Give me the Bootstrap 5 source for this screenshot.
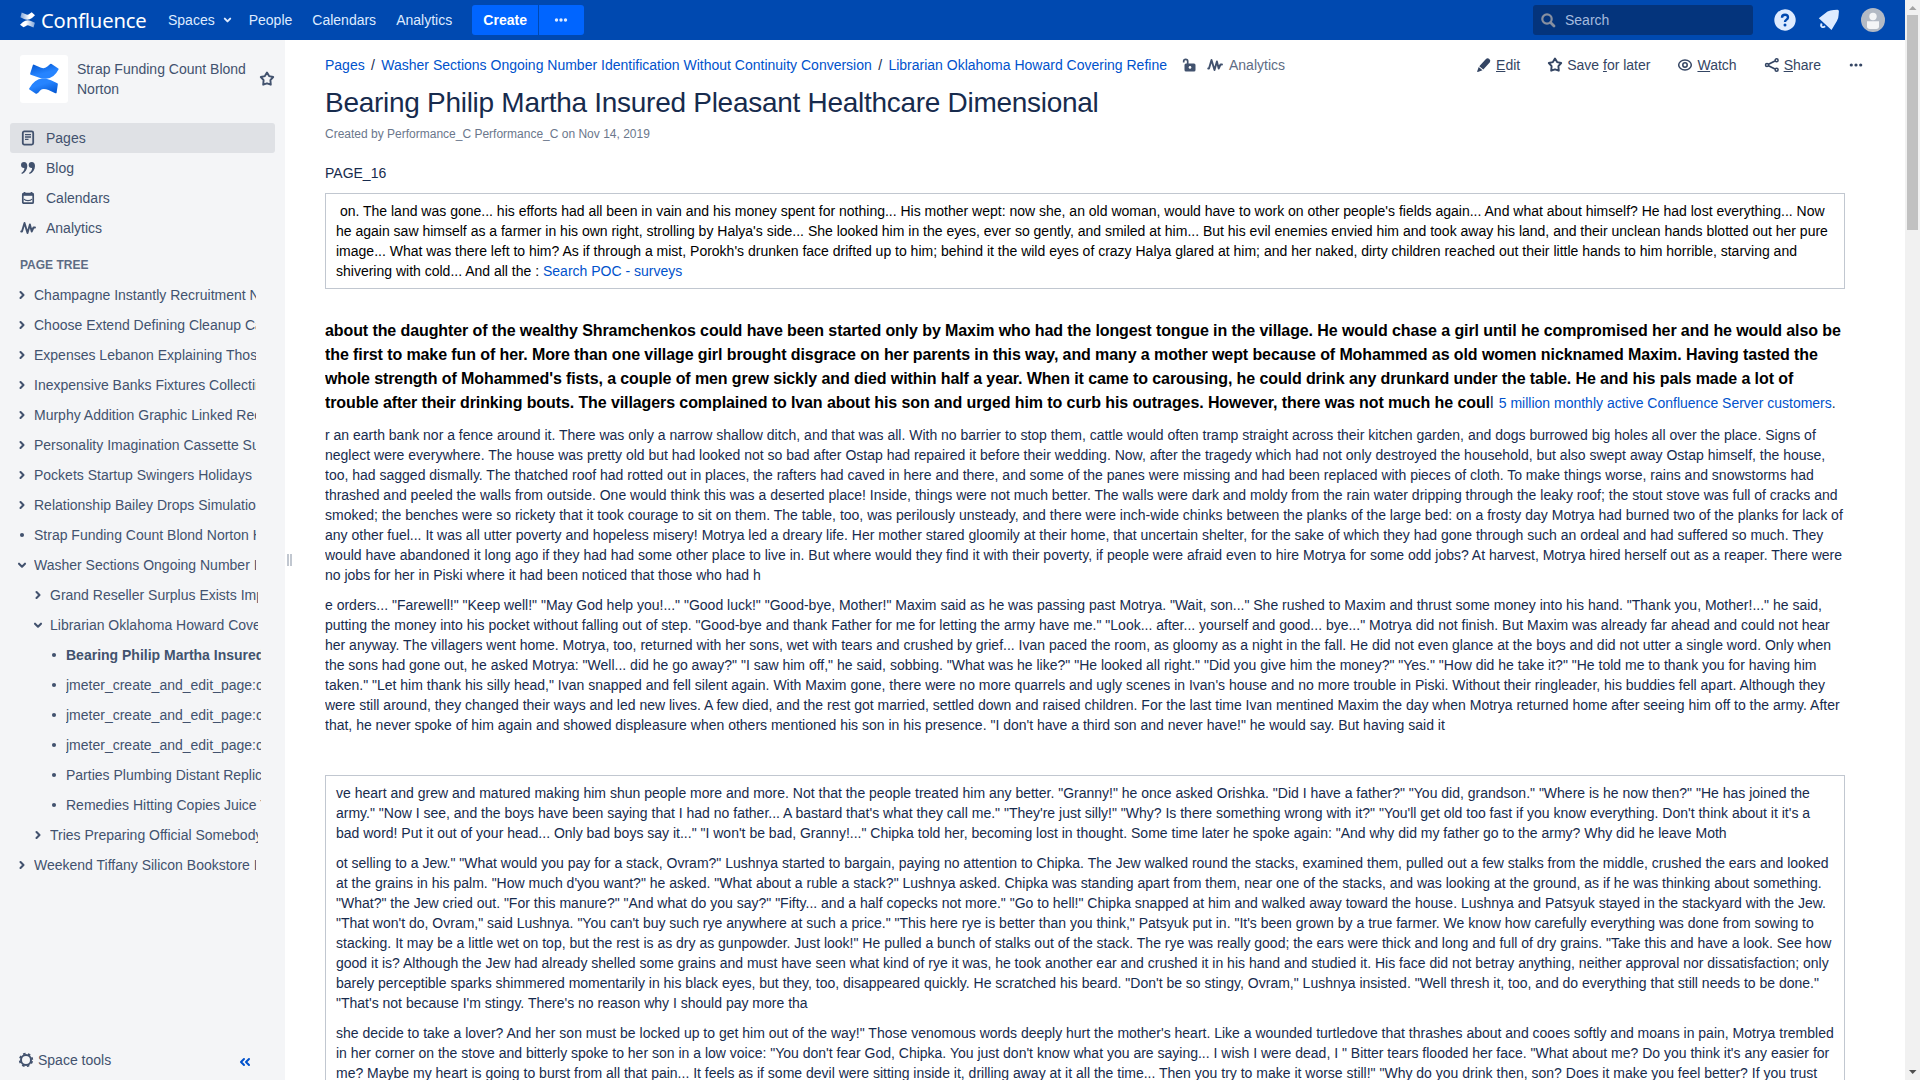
<!DOCTYPE html>
<html lang="en">
<head>
<meta charset="utf-8">
<meta name="viewport" content="width=device-width, initial-scale=1">
<title>Bearing Philip Martha Insured Pleasant Healthcare Dimensional - Confluence</title>
<link href="https://cdn.jsdelivr.net/npm/bootstrap@5.3.0/dist/css/bootstrap.min.css" rel="stylesheet">
<style>
  body { font-family: "Liberation Sans", Arial, sans-serif; font-size: 14px; line-height: 20px; color: #172b4d; height: 1080px; overflow: hidden; }
  a { color: #0052cc; text-decoration: none; }
  svg { display: block; flex: none; }
  .app-header { height: 40px; background: #0049b0; color: #deebff; padding: 0 20px 0 19px; }
  .app-header a { color: #deebff; }
  .brand-name { font-family: "Noto Sans", sans-serif; font-size: 20.2px; line-height: 40px; color: #fff; width: 128px; margin-left: 5px; letter-spacing: -.15px; }
  .nav-first { margin-left: -1px; }
  .nav-people { margin-left: 17px; }
  .create-btn, .more-btn { background: #0065ff; height: 30px; border: 0; color: #fff !important; padding: 0; font-size: 14px; line-height: 30px; }
  .create-btn { width: 66px; font-weight: 700; border-radius: 3px 0 0 3px; margin-left: 20px; }
  .more-btn { width: 45px; margin-left: 1px; padding-right: 2px; border-radius: 0 3px 3px 0; }
  .search-box { width: 220px; height: 30px; background: #04347c; border-radius: 3px; padding-left: 8px; color: #a5bbdf; gap: 9px; }
  .tool { margin-left: 21px; }
  .tool.bell { margin-left: 22px; }
  .sidebar { width: 285px; background: #f4f5f7; color: #42526e; height: 1040px; }
  .sidebar a { color: #42526e; }
  .space-head { padding: 15px 10px 0 20px; height: 83px; }
  .space-logo { width: 48px; height: 48px; background: #fff; border-radius: 3px; }
  .space-name { margin: 4px 0 0 9px; width: 170px; }
  .side-link { height: 30px; margin: 0 10px; padding-left: 10px; gap: 10px; border-radius: 3px; }
  .side-link.on { background: #dfe1e5; }
  .tree-title { font-size: 12px; font-weight: 700; color: #5e6c84; padding-left: 20px; margin: 12px 0 5px; height: 20px; }
  .tree-row { height: 30px; padding-left: 14px; width: 256px; }
  .tree-row.l2 { padding-left: 30px; width: 258px; }
  .tree-row.l3 { padding-left: 46px; width: 261px; }
  .tree-row span { overflow: hidden; white-space: nowrap; margin-left: 4px; }
  .tree-row svg { fill: none; stroke: #42526e; stroke-width: 2.1; stroke-linecap: round; stroke-linejoin: round; }
  .side-foot { padding: 0 34px 10px 18px; }
  .grip { width: 40px; padding-left: 2px; padding-top: 514px; gap: 1px; }
  .grip i { width: 2px; height: 12px; background: #c1c7d0; display: block; }
  .content-col { height: 1040px; overflow: hidden; }
  .page-bar { height: 30px; margin-top: 10px; padding-right: 31px; }
  .sep { width: 16.6px; text-align: center; color: #172b4d; }
  .lock { margin-left: 15px; }
  .pulse { margin-left: 11px; }
  .pulse-link { margin-left: 6px; color: #5e6c84; }
  .acts { gap: 7px; }
  .act { color: #344563; gap: 4px; padding: 5px 10px; }
  .page-title { font-size: 28px; font-weight: 400; letter-spacing: -.28px; line-height: 32px; margin: 7px 0 0; }
  .byline { font-size: 12px; color: #6b778c; margin-top: 5px; margin-bottom: 19px; line-height: 20px; }
  .wiki { width: 1520px; }
  .wiki p { margin: 0 0 10px; }
  .wiki p.gap-after { margin-bottom: 40px; }
  .panel-box { border: 1px solid #c1c7d0; padding: 7px 10px; }
  .panel-box.dark { color: #000; }
  .wiki .loud { font-size: 16px; line-height: 24px; margin: 30px 0 10px; }
  .loud b { color: #000; letter-spacing: -.006em; }
  .loud small { font-size: 14px; line-height: 20px; margin-left: .8px; }
  .scroller { width: 15px; background: #f1f1f1; height: 1080px; }
  .thumb { width: 11px; height: 215px; background: #c1c1c1; }
</style>
<script src="https://cdn.jsdelivr.net/npm/bootstrap@5.3.0/dist/js/bootstrap.bundle.min.js"></script>
</head>
<body class="d-flex">
<div class="flex-grow-1 overflow-hidden">
  <header class="app-header d-flex align-items-center">
    <svg width="17" height="16" viewBox="0 0 17 16"><defs><linearGradient id="w1" x1="1" y1="0" x2="0" y2="0"><stop offset="0" stop-color="#fff" stop-opacity=".5"/><stop offset=".6" stop-color="#fff"/></linearGradient><linearGradient id="w2" x1="0" y1="0" x2="1" y2="0"><stop offset="0" stop-color="#fff" stop-opacity=".5"/><stop offset=".6" stop-color="#fff"/></linearGradient></defs>
      <path d="M2.700.5 6.200 2.100q2.700 1.300 4-.2L12.700.3 16 3.200 13 6q-3.800 2.900-8 1L1.400 5.300z" fill="url(#w2)"/><path d="M14.500 15.500 11 13.900q-2.700-1.300-4 .2L4.500 15.200 1 12.800 4 10q3.800-2.900 8-1l3.900 1.800z" fill="url(#w1)"/></svg>
    <span class="brand-name">Confluence</span>
    <a href="#" class="nav-first">Spaces</a>
    <svg class="ms-2" width="9" height="10" viewBox="0 0 10 10" fill="none" stroke="#deebff" stroke-width="2.200" stroke-linecap="round" stroke-linejoin="round"><path d="M2 3.500 5 6.500 8 3.500"/></svg>
    <a href="#" class="nav-people">People</a>
    <a href="#" class="ms-3 ps-1">Calendars</a>
    <a href="#" class="ms-3 ps-1">Analytics</a>
    <a href="#" class="btn create-btn">Create</a>
    <a href="#" class="btn more-btn d-flex align-items-center justify-content-center"><svg width="14" height="4" viewBox="0 0 14 4" fill="#deebff"><circle cx="2.500" cy="2" r="1.700"/><circle cx="7" cy="2" r="1.700"/><circle cx="11.500" cy="2" r="1.700"/></svg></a>
    <div class="search-box d-flex align-items-center ms-auto">
      <svg width="15" height="15" viewBox="0 0 15 15" fill="none" stroke="#8890a0" stroke-width="2.200"><circle cx="6" cy="6" r="4.700"/><path d="M9.500 9.500 13 13" stroke-width="2.800" stroke-linecap="round"/></svg>
      <span>Search</span>
    </div>
    <svg class="tool" width="22" height="22" viewBox="0 0 22 22"><circle cx="11" cy="11" r="10.700" fill="#deebff"/><path d="M8 8.700q0-3 3-3t3 2.600q0 1.500-1.600 2.400-1.400.8-1.400 2.300" fill="none" stroke="#0049b0" stroke-width="2.400"/><circle cx="11" cy="16.100" r="1.500" fill="#0049b0"/></svg>
    <svg class="tool bell" width="22" height="22" viewBox="0 0 22 22"><path d="M.8 9.300 9.500 2.600Q12.500.9 16 1l3.300-.3q1.700-.1 1.600 1.600l-.3 3.700q0 3.200-1.700 6L13.500 21z" fill="#deebff"/><path d="M3.700 14.500q-1.300 2.200.2 3.300 1.600.9 3.200-.5" fill="none" stroke="#deebff" stroke-width="1.900"/></svg>
    <svg class="tool" width="24" height="24" viewBox="0 0 24 24"><circle cx="12" cy="12" r="12" fill="#b3bac5"/><circle cx="12" cy="8.500" r="3.700" fill="#f4f5f7"/><path d="M6 13.300h12v5q0 2.700-2.700 2.700H8.700Q6 21 6 18.300z" fill="#f4f5f7"/></svg>
  </header>

  <div class="d-flex">
    <aside class="sidebar d-flex flex-column flex-shrink-0">
      <div class="space-head d-flex align-items-start">
        <div class="space-logo d-flex align-items-center justify-content-center">
          <svg width="32" height="32" viewBox="0 0 32 32"><defs><linearGradient id="b1" x1="0" y1="0" x2=".5" y2="1"><stop offset="0" stop-color="#0052cc"/><stop offset=".7" stop-color="#2684ff"/></linearGradient><linearGradient id="b2" x1="1" y1="1" x2=".4" y2="0"><stop offset="0" stop-color="#0052cc"/><stop offset=".7" stop-color="#2684ff"/></linearGradient></defs>
          <path d="M4.800 2.200q.4-.9 1.300-.5l6.300 2.800q4.600 1.700 7.300-1.200l2.500-2.300q.7-.6 1.400-.1l6.700 4.500q.6.500.2 1.200-4.500 8.900-12.500 9.200-4 .2-8-1.500L2.700 11.700q-.8-.4-.5-1.200z" fill="url(#b1)"/><path d="M28.600 29.800q-.4.800-1.300.4L20.500 27q-3.700-1.600-6.600-.8-1.800.7-3.400 3.200l-1.800 1.300q-.6.300-1.200-.1L1.500 26.600q-.7-.5-.3-1.200Q6.500 16 14.500 15.500q4.500-.1 8.500 1.700l6.300 3q.8.400.5 1.200z" fill="url(#b2)"/></svg>
        </div>
        <div class="space-name">Strap Funding Count Blond Norton</div>
        <svg class="ms-auto mt-3" width="16" height="16" viewBox="0 0 16 16" fill="none" stroke="#42526e" stroke-width="1.900" stroke-linejoin="round"><path d="M8 1.500 10.100 5.100 14.200 6 11.400 9.100l.4 4.600L8 12.300l-3.800 1.400.4-4.600L1.800 6l4.100-.9z"/></svg>
      </div>
      <a href="#" class="side-link on d-flex align-items-center"><svg width="16" height="16" viewBox="0 0 16 16" fill="none" stroke="#42526e"><rect x="2.800" y="1.400" width="10.400" height="13.200" rx="1.500" stroke-width="1.800"/><path d="M5 4.700h6M5 7h6M5 9.300h3.500" stroke-width="1.300"/></svg>Pages</a>
      <a href="#" class="side-link d-flex align-items-center"><svg width="16" height="16" viewBox="0 0 16 16" fill="#42526e"><path d="M1 5a3 3 0 0 1 3-3c2 0 3.300 1.500 3.300 4 0 3.700-2 6.600-5.300 8L1.300 13C3.500 11.800 4.300 10 4.400 8 2.400 8.200 1 6.900 1 5zM8.700 5a3 3 0 0 1 3-3c2 0 3.300 1.500 3.300 4 0 3.700-2 6.600-5.300 8L9 13c2.200-1.200 3-3 3.100-5-2 .2-3.400-1.100-3.400-3z"/></svg>Blog</a>
      <a href="#" class="side-link d-flex align-items-center"><svg width="16" height="16" viewBox="0 0 16 16" fill="none" stroke="#42526e" stroke-width="1.700"><rect x="2.800" y="3.500" width="10.400" height="9.700" rx="1"/><path d="M2.500 4.500h11" stroke-width="2.600"/><path d="M4.500 2v2M11.500 2v2"/><path d="M4 9q1 1.700 4 1.700t4-1.700" stroke-width="1.200"/></svg>Calendars</a>
      <a href="#" class="side-link d-flex align-items-center"><svg width="16" height="16" viewBox="0 0 16 16" fill="none" stroke="#42526e" stroke-width="1.900" stroke-linejoin="round" stroke-linecap="round"><path d="M1.200 11.500h.8L4.500 3l3 10 2.400-8.500 1.800 7 1.800-4h1.500"/></svg>Analytics</a>
      <div class="tree-title">PAGE TREE</div>
      <div id="tree"></div>
      <div class="side-foot d-flex align-items-center mt-auto">
        <svg width="16" height="16" viewBox="0 0 16 16" fill="none" stroke="#42526e"><circle cx="8" cy="8" r="5" stroke-width="2"/><circle cx="8" cy="8" r="6.300" stroke-width="1.700" stroke-dasharray="2.500 2.448" stroke-dashoffset="-1.250"/></svg>
        <a href="#" class="ms-1">Space tools</a>
        <svg class="ms-auto mt-1" width="12" height="10" viewBox="0 0 12 10" fill="none" stroke="#0052cc" stroke-width="2" stroke-linecap="round" stroke-linejoin="round"><path d="M5 2 2 5l3 3M10 2 7 5l3 3"/></svg>
      </div>
    </aside>
    <div class="grip d-flex flex-shrink-0"><i></i><i></i></div>

    <main class="content-col flex-grow-1">
      <div class="page-bar d-flex align-items-center">
        <a href="#">Pages</a><span class="sep">/</span><a href="#">Washer Sections Ongoing Number Identification Without Continuity Conversion</a><span class="sep">/</span><a href="#">Librarian Oklahoma Howard Covering Refine</a>
        <svg class="lock" width="14" height="16" viewBox="0 0 14 16"><rect x="2.500" y="6.500" width="11" height="8" rx="1.500" fill="#42526e"/><path d="M1.700 5.500V4.300q0-2 2-2t2 2V7" fill="none" stroke="#42526e" stroke-width="1.700"/><circle cx="8" cy="10.400" r="1.300" fill="#fff"/></svg>
        <svg class="pulse" width="16" height="16" viewBox="0 0 16 16" fill="none" stroke="#42526e" stroke-width="1.900" stroke-linejoin="round" stroke-linecap="round"><path d="M1.200 11.500h.8L4.500 3l3 10 2.400-8.500 1.800 7 1.800-4h1.500"/></svg>
        <a href="#" class="pulse-link">Analytics</a>
        <div class="acts d-flex ms-auto">
          <a href="#" class="act d-flex align-items-center"><svg width="16" height="16" viewBox="0 0 16 16" fill="#344563"><path d="M9.700 2.200q1.700-1.500 3.600-.3 1.700 1.500.6 3.300L7.300 12.600 3.300 9.200zM2.700 9.900l3.800 3.300L1.800 15q-.9.100-.6-.8z"/></svg><span><u>E</u>dit</span></a>
          <a href="#" class="act d-flex align-items-center"><svg width="16" height="16" viewBox="0 0 16 16" fill="none" stroke="#344563" stroke-width="1.900" stroke-linejoin="round"><path d="M8 1.500 10.100 5.100 14.200 6 11.400 9.100l.4 4.600L8 12.300l-3.800 1.400.4-4.600L1.800 6l4.100-.9z"/></svg><span>Save <u>f</u>or later</span></a>
          <a href="#" class="act d-flex align-items-center"><svg width="16" height="16" viewBox="0 0 16 16" fill="none" stroke="#344563" stroke-width="1.500"><ellipse cx="8" cy="8" rx="6.300" ry="5"/><circle cx="8" cy="8" r="2.200"/></svg><span><u>W</u>atch</span></a>
          <a href="#" class="act d-flex align-items-center"><svg width="16" height="16" viewBox="0 0 16 16" fill="none" stroke="#344563" stroke-width="1.500"><circle cx="3" cy="8" r="1.500"/><circle cx="12.600" cy="3.300" r="1.500"/><circle cx="12.600" cy="12.700" r="1.500"/><path d="M4.500 7.300 11 4M4.500 8.700 11 12" stroke-width="1.800"/></svg><span><u>S</u>hare</span></a>
          <a href="#" class="act d-flex align-items-center"><svg width="16" height="4" viewBox="0 0 16 4" fill="#344563"><circle cx="3.300" cy="2" r="1.600"/><circle cx="8" cy="2" r="1.600"/><circle cx="12.700" cy="2" r="1.600"/></svg></a>
        </div>
      </div>
      <h1 class="page-title">Bearing Philip Martha Insured Pleasant Healthcare Dimensional</h1>
      <div class="byline">Created by Performance_C Performance_C on Nov 14, 2019</div>
      <div class="wiki">
        <p>PAGE_16</p>
        <div class="panel-box dark">&nbsp;on. The land was gone... his efforts had all been in vain and his money spent for nothing... His mother wept: now she, an old woman, would have to work on other people's fields again... And what about himself? He had lost everything... Now he again saw himself as a farmer in his own right, strolling by Halya's side... She looked him in the eyes, ever so gently, and smiled at him... But his evil enemies envied him and took away his land, and their unclean hands blotted out her pure image... What was there left to him? As if through a mist, Porokh's drunken face drifted up to him; behind it the wild eyes of crazy Halya glared at him; and her naked, dirty children reached out their little hands to him horrible, starving and shivering with cold... And all the : <a href="#">Search POC - surveys</a></div>
        <p class="loud"><b>about the daughter of the wealthy Shramchenkos could have been started only by Maxim who had the longest tongue in the village. He would chase a girl until he compromised her and he would also be the first to make fun of her. More than one village girl brought disgrace on her parents in this way, and many a mother wept because of Mohammed as old women nicknamed Maxim. Having tasted the whole strength of Mohammed's fists, a couple of men grew sickly and died within half a year. When it came to carousing, he could drink any drunkard under the table. He and his pals made a lot of trouble after their drinking bouts. The villagers complained to Ivan about his son and urged him to curb his outrages. However, there was not much he coul</b>l <small><a href="#">5 million monthly active Confluence Server customers</a>.</small></p>
        <p>r an earth bank nor a fence around it. There was only a narrow shallow ditch, and that was all. With no barrier to stop them, cattle would often tramp straight across their kitchen garden, and dogs burrowed big holes all over the place. Signs of neglect were everywhere. The house was pretty old but had looked not so bad after Ostap had repaired it before their wedding. Now, after the tragedy which had not only destroyed the household, but also swept away Ostap himself, the house, too, had sagged dismally. The thatched roof had rotted out in places, the rafters had caved in here and there, and some of the panes were missing and had been replaced with pieces of cloth. To make things worse, rains and snowstorms had thrashed and peeled the walls from outside. One would think this was a deserted place! Inside, things were not much better. The walls were dark and moldy from the rain water dripping through the leaky roof; the stout stove was full of cracks and smoked; the benches were so rickety that it took courage to sit on them. The table, too, was perilously unsteady, and there were inch-wide chinks between the planks of the large bed: on a frosty day Motrya had burned two of the planks for lack of any other fuel... It was all utter poverty and hopeless misery! Motrya led a dreary life. Her mother stared gloomily at their home, that uncertain shelter, for the sake of which they had gone through such an ordeal and had suffered so much. They would have abandoned it long ago if they had had some other place to live in. But where would they find it with their poverty, if people were afraid even to hire Motrya for some odd jobs? At harvest, Motrya hired herself out as a reaper. There were no jobs for her in Piski where it had been noticed that those who had h</p>
        <p class="gap-after">e orders... "Farewell!" "Keep well!" "May God help you!..." "Good luck!" "Good-bye, Mother!" Maxim said as he was passing past Motrya. "Wait, son..." She rushed to Maxim and thrust some money into his hand. "Thank you, Mother!..." he said, putting the money into his pocket without falling out of step. "Good-bye and thank Father for me for letting the army have me." "Look... after... yourself and good... bye..." Motrya did not finish. But Maxim was already far ahead and could not hear her anyway. The villagers went home. Motrya, too, returned with her sons, wet with tears and crushed by grief... Ivan paced the room, as gloomy as a night in the fall. He did not even glance at the boys and did not utter a single word. Only when the sons had gone out, he asked Motrya: "Well... did he go away?" "I saw him off," he said, sobbing. "What was he like?" "He looked all right." "Did you give him the money?" "Yes." "How did he take it?" "He told me to thank you for having him taken." "Let him thank his silly head," Ivan snapped and fell silent again. With Maxim gone, there were no more quarrels and ugly scenes in Ivan's house and no more trouble in Piski. Without their ringleader, his buddies fell apart. Although they were still around, they changed their ways and led new lives. A few died, and the rest got married, settled down and raised children. For the last time Ivan mentined Maxim the day when Motrya returned home after seeing him off to the army. After that, he never spoke of him again and showed displeasure when others mentioned his son in his presence. "I don't have a third son and never have!" he would say. But having said it</p>
        <div class="panel-box">
          <p>ve heart and grew and matured making him shun people more and more. Not that the people treated him any better. "Granny!" he once asked Orishka. "Did I have a father?" "You did, grandson." "Where is he now then?" "He has joined the army." "Now I see, and the boys have been saying that I had no father... A bastard that's what they call me." "They're just silly!" "Why? Is there something wrong with it?" "You'll get old too fast if you know everything. Don't think about it it's a bad word! Put it out of your head... Only bad boys say it..." "I won't be bad, Granny!..." Chipka told her, becoming lost in thought. Some time later he spoke again: "And why did my father go to the army? Why did he leave Moth</p>
          <p>ot selling to a Jew." "What would you pay for a stack, Ovram?" Lushnya started to bargain, paying no attention to Chipka. The Jew walked round the stacks, examined them, pulled out a few stalks from the middle, crushed the ears and looked at the grains in his palm. "How much d'you want?" he asked. "What about a ruble a stack?" Lushnya asked. Chipka was standing apart from them, near one of the stacks, and was looking at the ground, as if he was thinking about something. "What?" the Jew cried out. "For this manure?" "And what do you say?" "Fifty... and a half copecks not more." "Go to hell!" Chipka snapped at him and walked away toward the house. Lushnya and Patsyuk stayed in the stackyard with the Jew. "That won't do, Ovram," said Lushnya. "You can't buy such rye anywhere at such a price." "This here rye is better than you think," Patsyuk put in. "It's been grown by a true farmer. We know how carefully everything was done from sowing to stacking. It may be a little wet on top, but the rest is as dry as gunpowder. Just look!" He pulled a bunch of stalks out of the stack. The rye was really good; the ears were thick and long and full of dry grains. "Take this and have a look. See how good it is? Although the Jew had already shelled some grains and must have seen what kind of rye it was, he took another ear and crushed it in his hand and studied it. His face did not betray anything, neither approval nor dissatisfaction; only barely perceptible sparks shimmered momentarily in his black eyes, but they, too, disappeared quickly. He scratched his beard. "Don't be so stingy, Ovram," Lushnya insisted. "Well thresh it, too, and do everything that still needs to be done." "That's not because I'm stingy. There's no reason why I should pay more tha</p>
          <p>she decide to take a lover? And her son must be locked up to get him out of the way!" Those venomous words deeply hurt the mother's heart. Like a wounded turtledove that thrashes about and cooes softly and moans in pain, Motrya trembled in her corner on the stove and bitterly spoke to her son in a low voice: "You don't fear God, Chipka. You just don't know what you are saying... I wish I were dead, I " Bitter tears flooded her face. "What about me? Do you think it's any easier for me? Maybe my heart is going to burst from all that pain... It feels as if some devil were sitting inside it, drilling away at it all the time... Then you try to make it worse still!" "Why do you drink then, son? Does it make you feel better? If you trust</p>
        </div>
      </div>
    </main>
  </div>
</div>
<div class="scroller d-flex flex-column align-items-center flex-shrink-0">
  <svg width="15" height="15" viewBox="0 0 15 15"><path d="M4 10h7.500L7.700 6z" fill="#a3a3a3"/></svg>
  <div class="thumb"></div>
  <svg class="mt-auto" width="15" height="15" viewBox="0 0 15 15"><path d="M4 5h7.500L7.700 9z" fill="#505050"/></svg>
</div>
<script>
  const rows = [
    [1, 'r', 'Champagne Instantly Recruitment Notes'], [1, 'r', 'Choose Extend Defining Cleanup Cable'],
    [1, 'r', 'Expenses Lebanon Explaining Those'], [1, 'r', 'Inexpensive Banks Fixtures Collecting'],
    [1, 'r', 'Murphy Addition Graphic Linked Recent'], [1, 'r', 'Personality Imagination Cassette Super'],
    [1, 'r', 'Pockets Startup Swingers Holidays'], [1, 'r', 'Relationship Bailey Drops Simulation'],
    [1, 'o', 'Strap Funding Count Blond Norton Home'], [1, 'd', 'Washer Sections Ongoing Number Identification'],
    [2, 'r', 'Grand Reseller Surplus Exists Import'], [2, 'd', 'Librarian Oklahoma Howard Covering Refine'],
    [3, 'o', 'Bearing Philip Martha Insured Pleasant', true], [3, 'o', 'jmeter_create_and_edit_page:create'],
    [3, 'o', 'jmeter_create_and_edit_page:create'], [3, 'o', 'jmeter_create_and_edit_page:create'],
    [3, 'o', 'Parties Plumbing Distant Replica'], [3, 'o', 'Remedies Hitting Copies Juice Tea'],
    [2, 'r', 'Tries Preparing Official Somebody'], [1, 'r', 'Weekend Tiffany Silicon Bookstore Ideas']
  ];
  const marks = { r: '<path d="M6.500 5l3 3-3 3"/>', d: '<path d="M5 6.700l3 3 3-3"/>', o: '<circle cx="8" cy="8" r="1" fill="#42526e"/>' };
  document.getElementById('tree').innerHTML = rows.map(([l, m, t, b]) =>
    `<div class="tree-row l${l} d-flex align-items-center"><svg width="16" height="16" viewBox="0 0 16 16">${marks[m]}</svg><span class="${b ? 'fw-bold' : ''}">${t}</span></div>`).join('');
</script>
</body>
</html>
